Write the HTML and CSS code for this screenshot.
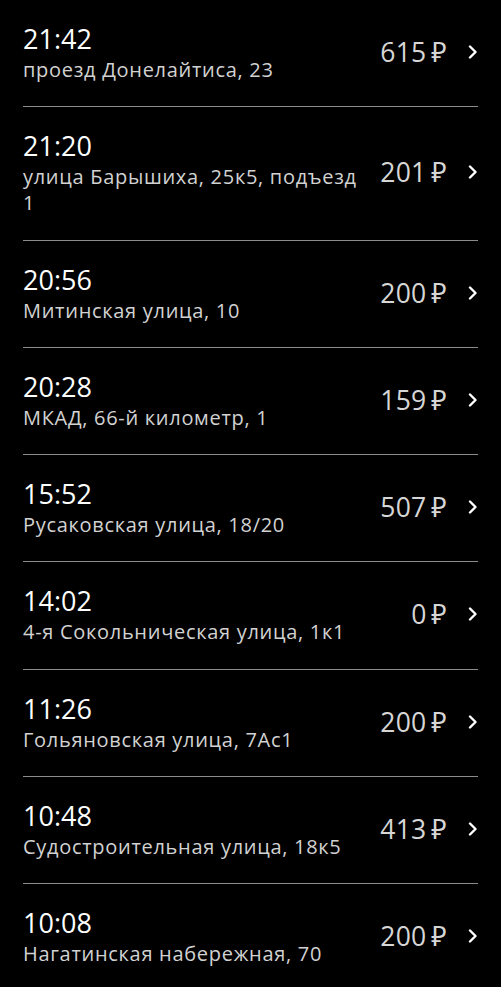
FILE: index.html
```html
<!DOCTYPE html>
<html lang="ru">
  <head>
    <meta charset="UTF-8" />
    <meta name="viewport" content="width=device-width, initial-scale=1.0" />
    <title>Поездки</title>
    <link rel="stylesheet" href="styles.css">
  </head>
  <body>
    <ul class="orders">
      <li class="order">
        <div class="info">
          <div class="time">21:42</div>
          <div class="address">проезд Донелайтиса, 23</div>
        </div>
        <div class="price">615&thinsp;₽</div>
        <svg class="chevron" width="10" height="14" viewBox="0 0 10 14"><path d="M2 1.5 L7.5 7 L2 12.5" /></svg>
      </li>
      <li class="order">
        <div class="info">
          <div class="time">21:20</div>
          <div class="address">улица Барышиха, 25к5, подъезд 1</div>
        </div>
        <div class="price">201&thinsp;₽</div>
        <svg class="chevron" width="10" height="14" viewBox="0 0 10 14"><path d="M2 1.5 L7.5 7 L2 12.5" /></svg>
      </li>
      <li class="order">
        <div class="info">
          <div class="time">20:56</div>
          <div class="address">Митинская улица, 10</div>
        </div>
        <div class="price">200&thinsp;₽</div>
        <svg class="chevron" width="10" height="14" viewBox="0 0 10 14"><path d="M2 1.5 L7.5 7 L2 12.5" /></svg>
      </li>
      <li class="order">
        <div class="info">
          <div class="time">20:28</div>
          <div class="address">МКАД, 66-й километр, 1</div>
        </div>
        <div class="price">159&thinsp;₽</div>
        <svg class="chevron" width="10" height="14" viewBox="0 0 10 14"><path d="M2 1.5 L7.5 7 L2 12.5" /></svg>
      </li>
      <li class="order">
        <div class="info">
          <div class="time">15:52</div>
          <div class="address">Русаковская улица, 18/20</div>
        </div>
        <div class="price">507&thinsp;₽</div>
        <svg class="chevron" width="10" height="14" viewBox="0 0 10 14"><path d="M2 1.5 L7.5 7 L2 12.5" /></svg>
      </li>
      <li class="order">
        <div class="info">
          <div class="time">14:02</div>
          <div class="address">4-я Сокольническая улица, 1к1</div>
        </div>
        <div class="price">0&thinsp;₽</div>
        <svg class="chevron" width="10" height="14" viewBox="0 0 10 14"><path d="M2 1.5 L7.5 7 L2 12.5" /></svg>
      </li>
      <li class="order">
        <div class="info">
          <div class="time">11:26</div>
          <div class="address">Гольяновская улица, 7Ас1</div>
        </div>
        <div class="price">200&thinsp;₽</div>
        <svg class="chevron" width="10" height="14" viewBox="0 0 10 14"><path d="M2 1.5 L7.5 7 L2 12.5" /></svg>
      </li>
      <li class="order">
        <div class="info">
          <div class="time">10:48</div>
          <div class="address">Судостроительная улица, 18к5</div>
        </div>
        <div class="price">413&thinsp;₽</div>
        <svg class="chevron" width="10" height="14" viewBox="0 0 10 14"><path d="M2 1.5 L7.5 7 L2 12.5" /></svg>
      </li>
      <li class="order">
        <div class="info">
          <div class="time">10:08</div>
          <div class="address">Нагатинская набережная, 70</div>
        </div>
        <div class="price">200&thinsp;₽</div>
        <svg class="chevron" width="10" height="14" viewBox="0 0 10 14"><path d="M2 1.5 L7.5 7 L2 12.5" /></svg>
      </li>
    </ul>
  </body>
</html>
```

FILE: styles.css
```css
body {
  background-color: #000;
  color: #fff;
  font-family: "Open Sans", "Noto Sans", sans-serif;
  margin: 0;
}

.orders {
  list-style: none;
  margin: 0;
  padding: 0;
}

.order {
  display: flex;
  align-items: center;
  margin: 0 23px;
  padding: 21px 0 23.25px;
  border-bottom: 1px solid #8c8c8c;
}
.order:last-child {
  border-bottom: none;
}

.info {
  flex: 1;
  min-width: 0;
  padding-right: 20px;
}

.time {
  font-size: 27px;
  line-height: 36px;
  color: #fff;
}

.address {
  font-size: 20px;
  letter-spacing: 0.7px;
  line-height: 26px;
  color: #d2d2d2;
}

.price {
  font-size: 26.5px;
  letter-spacing: 0.3px;
  color: #d6d6d6;
  white-space: nowrap;
}

.chevron {
  margin-left: 21px;
  flex-shrink: 0;
}
.chevron path {
  fill: none;
  stroke: #fff;
  stroke-width: 2.4;
  stroke-linecap: round;
  stroke-linejoin: round;
}
```
